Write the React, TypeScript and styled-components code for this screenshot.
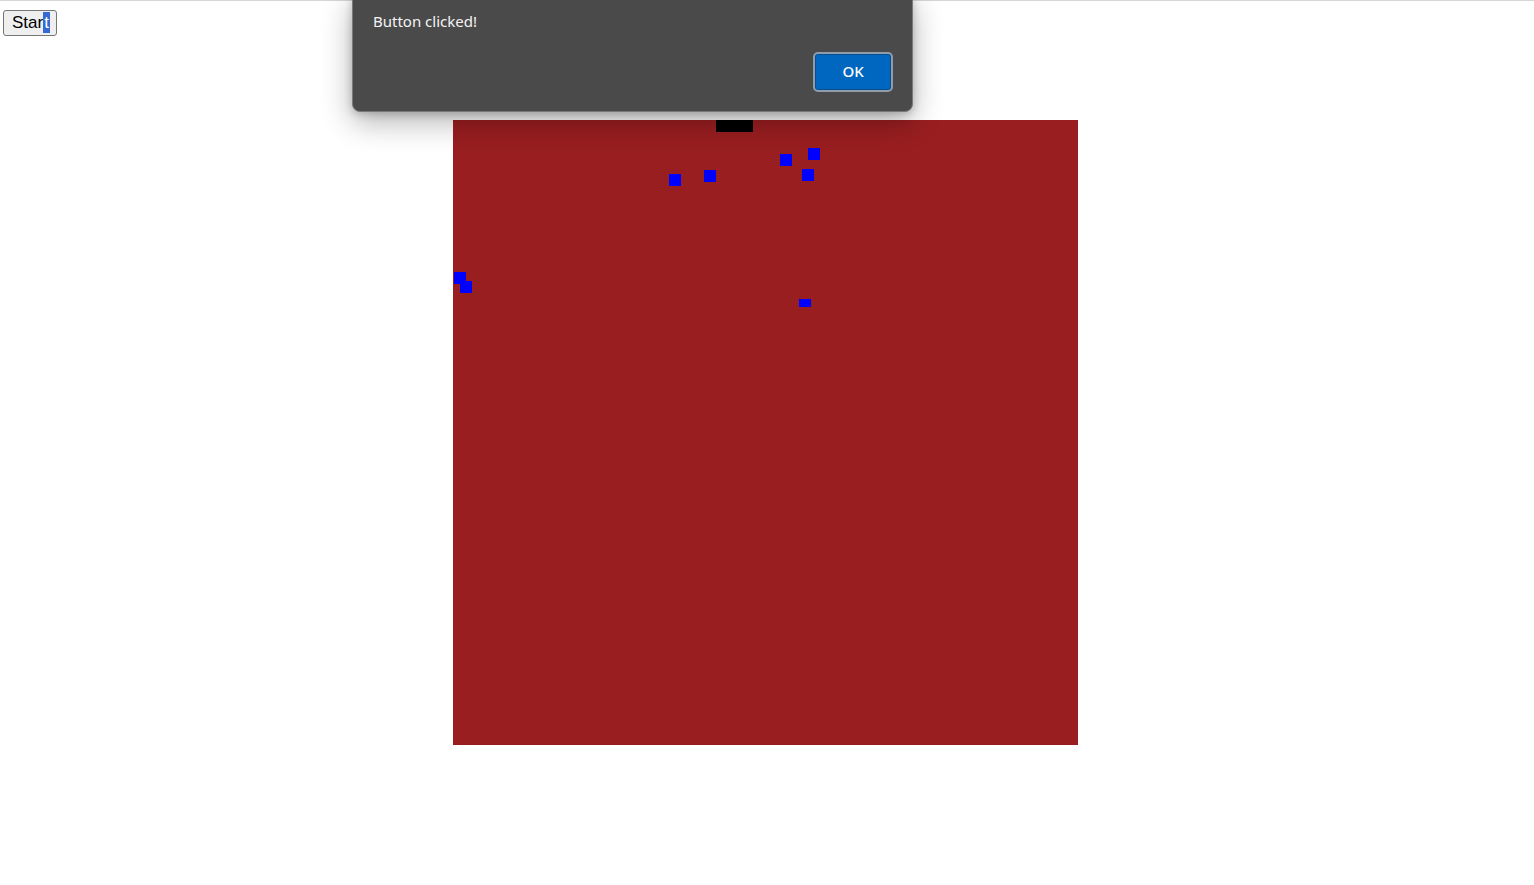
import React from "react";
import styled, { createGlobalStyle } from "styled-components";

const Global = createGlobalStyle`
  html, body { margin: 0; padding: 0; background: #ffffff; }
  body { font-family: "Liberation Sans", Arial, sans-serif; overflow: hidden; }
`;

const Page = styled.div`
  position: relative;
  width: 1534px;
  height: 885px;
  box-sizing: border-box;
  border-top: 1px solid #d6d6d6;
  padding: 9px 0 0 3px;
  display: flex;
  flex-direction: column;
  align-items: flex-start;
`;

const StartButton = styled.button`
  height: 26px;
  width: 54px;
  box-sizing: border-box;
  padding: 0 0 0 2px;
  border: 1px solid #767676;
  border-radius: 3px;
  background: #efefef;
  color: #000;
  font-family: "Liberation Sans", Arial, sans-serif;
  font-size: 17px;
  line-height: 24px;
  display: flex;
  align-items: center;
  justify-content: center;
`;

const Selected = styled.span`
  background: #3469d6;
  color: #ffffff;
  display: inline-block;
  line-height: 21px;
  padding: 0 1px;
`;

const Stage = styled.div`
  align-self: stretch;
  display: flex;
  justify-content: center;
  margin-top: 84px;
  padding-right: 6px;
`;

const Board = styled.svg`
  display: block;
  width: 625px;
  height: 625px;
  background: #991e20;
`;

const Dialog = styled.div`
  position: absolute;
  top: -8px;
  left: 352px;
  width: 561px;
  height: 119px;
  box-sizing: border-box;
  background: #4a4a4a;
  border: 1px solid #7a7a7a;
  border-radius: 8px;
  box-shadow: 0 10px 30px rgba(0, 0, 0, 0.3), 0 2px 8px rgba(0, 0, 0, 0.2);
  padding: 17px 19px 19px 20px;
  display: flex;
  flex-direction: column;
  font-family: "Noto Sans", "Open Sans", sans-serif;
`;

const Message = styled.div`
  color: #f4f4f4;
  font-size: 15px;
  line-height: 20px;
`;

const Actions = styled.div`
  margin-top: auto;
  display: flex;
  justify-content: flex-end;
`;

const OkButton = styled.button`
  width: 80px;
  height: 40px;
  box-sizing: border-box;
  border: 2px solid #8f9cab;
  border-radius: 5px;
  background: #0067c0;
  box-shadow: inset 0 0 0 1px #0a4f8e;
  color: #ffffff;
  font-family: "Noto Sans", "Open Sans", sans-serif;
  font-size: 15px;
  font-weight: 500;
  padding: 0 0 2px;
`;

const blocks = [
  { x: 669, y: 174, w: 12, h: 12 },
  { x: 704, y: 170, w: 12, h: 12 },
  { x: 780, y: 154, w: 12, h: 12 },
  { x: 808, y: 148, w: 12, h: 12 },
  { x: 802, y: 169, w: 12, h: 12 },
  { x: 454, y: 272, w: 12, h: 12 },
  { x: 460, y: 281, w: 12, h: 12 },
  { x: 799, y: 299, w: 12, h: 8 },
];

export default function App() {
  return (
    <>
      <Global />
      <Page>
        <StartButton>
          <span>
            Star<Selected>t</Selected>
          </span>
        </StartButton>
        <Stage>
          <Board viewBox="0 0 625 625">
            <rect x={716 - 453} y={0} width={37} height={12} fill="#000000" />
            {blocks.map((b, i) => (
              <rect
                key={i}
                x={b.x - 453}
                y={b.y - 120}
                width={b.w}
                height={b.h}
                fill="#0000ff"
              />
            ))}
          </Board>
        </Stage>
        <Dialog>
          <Message>Button clicked!</Message>
          <Actions>
            <OkButton>OK</OkButton>
          </Actions>
        </Dialog>
      </Page>
    </>
  );
}
